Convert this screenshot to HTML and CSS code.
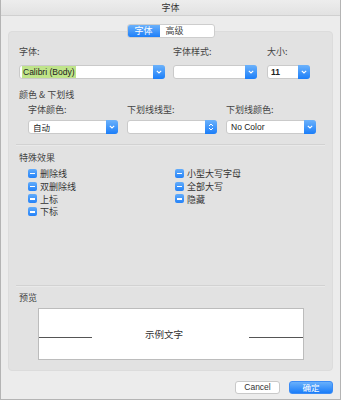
FILE: index.html
```html
<!DOCTYPE html>
<html lang="zh">
<head>
  <meta charset="UTF-8">
  <title>字体</title>
  <link rel="stylesheet" href="styles.css">
</head>
<body>
  <div class="font-dialog">
    <div class="font-dialog__title">字体</div>

    <div class="tab-row">
      <div class="tab-switch">
        <div class="tab-switch__item tab-switch__item--active">字体</div>
        <div class="tab-switch__item">高级</div>
      </div>
    </div>

    <div class="font-panel">
      <div class="font-row">
        <div class="field field--font">
          <div class="field__label">字体:</div>
          <div class="popup popup--font">
            <span class="popup__value"><span class="popup__selected">Calibri (Body)</span></span>
            <span class="popup__arrow"><svg width="6" height="4" viewBox="0 0 6 4"><path d="M0.8 0.8 L3 3 L5.2 0.8" fill="none" stroke="#fff" stroke-width="1.1"/></svg></span>
          </div>
        </div>
        <div class="field field--style">
          <div class="field__label">字体样式:</div>
          <div class="popup popup--style">
            <span class="popup__value"></span>
            <span class="popup__arrow"><svg width="6" height="4" viewBox="0 0 6 4"><path d="M0.8 0.8 L3 3 L5.2 0.8" fill="none" stroke="#fff" stroke-width="1.1"/></svg></span>
          </div>
        </div>
        <div class="field field--size">
          <div class="field__label">大小:</div>
          <div class="popup popup--size">
            <span class="popup__value popup__value--bold">11</span>
            <span class="popup__arrow"><svg width="6" height="4" viewBox="0 0 6 4"><path d="M0.8 0.8 L3 3 L5.2 0.8" fill="none" stroke="#fff" stroke-width="1.1"/></svg></span>
          </div>
        </div>
      </div>

      <div class="group-title group-title--color">颜色 &amp; 下划线</div>
      <div class="color-row">
        <div class="field">
          <div class="field__label">字体颜色:</div>
          <div class="popup popup--wide">
            <span class="popup__value popup__value--cjk">自动</span>
            <span class="popup__arrow"><svg width="6" height="4" viewBox="0 0 6 4"><path d="M0.8 0.8 L3 3 L5.2 0.8" fill="none" stroke="#fff" stroke-width="1.1"/></svg></span>
          </div>
        </div>
        <div class="field">
          <div class="field__label">下划线线型:</div>
          <div class="popup popup--wide">
            <span class="popup__value"></span>
            <span class="popup__arrow"><svg width="6" height="8" viewBox="0 0 6 8"><path d="M1 3 L3 1 L5 3 M1 5 L3 7 L5 5" fill="none" stroke="#fff" stroke-width="1"/></svg></span>
          </div>
        </div>
        <div class="field">
          <div class="field__label">下划线颜色:</div>
          <div class="popup popup--wide">
            <span class="popup__value">No Color</span>
            <span class="popup__arrow"><svg width="6" height="4" viewBox="0 0 6 4"><path d="M0.8 0.8 L3 3 L5.2 0.8" fill="none" stroke="#fff" stroke-width="1.1"/></svg></span>
          </div>
        </div>
      </div>

      <div class="divider divider--top"></div>

      <div class="group-title group-title--effects">特殊效果</div>
      <div class="effects">
        <div class="effects__col">
          <div class="check"><span class="check__box"></span>删除线</div>
          <div class="check"><span class="check__box"></span>双删除线</div>
          <div class="check"><span class="check__box"></span>上标</div>
          <div class="check"><span class="check__box"></span>下标</div>
        </div>
        <div class="effects__col effects__col--right">
          <div class="check"><span class="check__box"></span>小型大写字母</div>
          <div class="check"><span class="check__box"></span>全部大写</div>
          <div class="check"><span class="check__box"></span>隐藏</div>
        </div>
      </div>

      <div class="divider divider--bottom"></div>

      <div class="group-title group-title--preview">预览</div>
      <div class="preview">
        <span class="preview__line"></span>
        <span class="preview__text">示例文字</span>
        <span class="preview__line preview__line--right"></span>
      </div>
    </div>

    <div class="font-dialog__buttons">
      <button class="push-button">Cancel</button>
      <button class="push-button push-button--default">确定</button>
    </div>
  </div>
</body>
</html>
```

FILE: styles.css
```css
/* Window */
body {
  margin: 0;
  background: #ececec;
}

.font-dialog {
  width: 341px;
  height: 400px;
  box-sizing: border-box;
  border: 1px solid #b4b4b4;
  border-top: 0;
  background: #ececec;
  font-family: "Noto Sans CJK SC", "Liberation Sans", sans-serif;
  font-size: 9px;
  color: #444;
}

.font-dialog__title {
  height: 15px;
  line-height: 15px;
  text-align: center;
  background: linear-gradient(#ededed, #e2e2e2);
  border-bottom: 1px solid #d0d0d0;
  color: #333;
}

/* Tabs */
.tab-row {
  display: flex;
  justify-content: center;
  margin-top: 8px;
  position: relative;
  z-index: 1;
}

.tab-switch {
  display: flex;
  height: 12px;
  background: #fff;
  border: 1px solid #cdcdcd;
  border-radius: 3px;
  overflow: hidden;
}

.tab-switch__item {
  line-height: 12px;
  padding: 0 4px 0 6px;
  width: 44px;
}

.tab-switch__item--active {
  width: 24px;
  padding: 0 4px;
  text-align: center;
  color: #fff;
  background: linear-gradient(#6bb1fb, #1d7ff9);
}

/* Main panel */
.font-panel {
  margin: -7px 7px 0 7px;
  height: 340px;
  box-sizing: border-box;
  padding-top: 14px;
  background: #e2e2e2;
  border-radius: 4px;
  border: 1px solid #dcdcdc;
}

.field__label {
  height: 12px;
  line-height: 12px;
}

.font-row {
  display: flex;
  padding-left: 10px;
}

.font-row .field__label {
  margin-bottom: 7px;
}

.field--font { width: 154px; }
.field--style { width: 94px; }

/* Popup buttons */
.popup {
  display: flex;
  height: 14px;
  box-sizing: border-box;
  background: #fff;
  border: 1px solid #cacaca;
  border-radius: 3px;
}

.popup--font { width: 146px; }
.popup--style { width: 84px; }
.popup--size { width: 43px; }
.popup--wide { width: 90px; }

.popup__value {
  flex: 1;
  padding-left: 2px;
  line-height: 12px;
  font-family: "Liberation Sans", "Noto Sans CJK SC", sans-serif;
  font-size: 8.5px;
  color: #222;
  overflow: hidden;
  white-space: nowrap;
}

.popup__value--bold { font-weight: bold; padding-left: 3px; }
.popup__value--cjk { font-family: "Noto Sans CJK SC", sans-serif; padding-left: 5px; }

.popup__selected {
  background: #bfe48a;
  padding: 1px 1px;
}

.popup__arrow {
  width: 12px;
  margin: -1px -1px -1px 0;
  display: flex;
  align-items: center;
  justify-content: center;
  background: linear-gradient(#6cb2fb, #1b7ef9);
  border-radius: 0 3px 3px 0;
}

.color-row .popup__value { padding-left: 4px; }

/* Groups */
.group-title {
  height: 12px;
  line-height: 12px;
  padding-left: 10px;
}

.group-title--color { margin-top: 10px; }
.group-title--effects { margin-top: 6px; }
.group-title--preview { margin-top: 5px; }

.color-row {
  display: flex;
  gap: 9px;
  padding-left: 19px;
  margin-top: 3px;
}

.color-row .field__label {
  margin-bottom: 4px;
}

.divider {
  height: 1px;
  margin: 0 7px;
  background: #d2d2d2;
  border-bottom: 1px solid #e9e9e9;
}

.divider--top { margin-top: 10px; }
.divider--bottom { margin-top: 0; }

/* Effects */
.effects {
  display: flex;
  height: 121px;
  padding-left: 19px;
  padding-top: 3px;
  box-sizing: border-box;
}

.effects__col { width: 147px; }

.check {
  display: flex;
  align-items: center;
  height: 12.8px;
  color: #333;
}

.check__box {
  width: 9px;
  height: 9px;
  margin-right: 3px;
  border-radius: 2px;
  background: linear-gradient(#62acfb, #2482f8);
  position: relative;
}

.check__box::after {
  content: "";
  position: absolute;
  left: 2px;
  right: 2px;
  top: 4px;
  height: 1.3px;
  background: #fff;
}

/* Preview */
.preview {
  display: flex;
  align-items: center;
  margin: 4px 0 0 29px;
  width: 266px;
  height: 52px;
  box-sizing: border-box;
  background: #fff;
  border: 1px solid #bcbcbc;
}

.preview__line {
  width: 53px;
  height: 1px;
  margin-top: 6px;
  background: #555;
}

.preview__line--right {
  margin-left: auto;
  width: 54px;
}

.preview__text {
  margin-left: 53px;
  font-size: 9.5px;
  color: #333;
}

/* Bottom buttons */
.font-dialog__buttons {
  display: flex;
  justify-content: flex-end;
  gap: 9px;
  margin-top: 10px;
  padding-right: 7px;
}

.push-button {
  width: 45px;
  height: 13px;
  padding: 0;
  border: 1px solid #c9c9c9;
  border-radius: 3px;
  background: #fff;
  font-family: "Liberation Sans", sans-serif;
  font-size: 8.5px;
  color: #333;
  line-height: 11px;
}

.push-button--default {
  width: 44px;
  border-color: #3b8cf6;
  background: linear-gradient(#69b0fb, #1a7df9);
  color: #fff;
  font-family: "Noto Sans CJK SC", sans-serif;
}
```
